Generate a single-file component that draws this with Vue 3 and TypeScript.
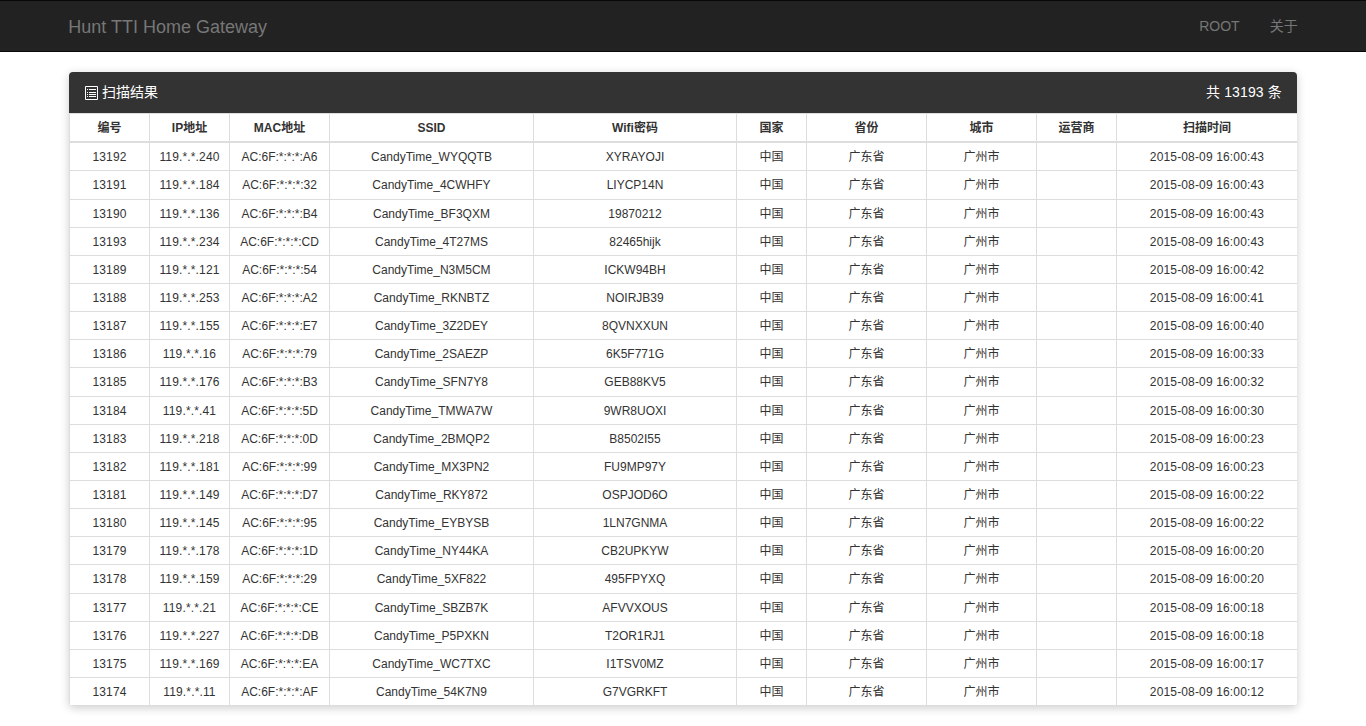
<script setup lang="ts">
interface Row { id: number; ip: string; mac: string; ssid: string; pwd: string; time: string }
const raw = `13192|240|A6|WYQQTB|XYRAYOJI|43
13191|184|32|4CWHFY|LIYCP14N|43
13190|136|B4|BF3QXM|19870212|43
13193|234|CD|4T27MS|82465hijk|43
13189|121|54|N3M5CM|ICKW94BH|42
13188|253|A2|RKNBTZ|NOIRJB39|41
13187|155|E7|3Z2DEY|8QVNXXUN|40
13186|16|79|2SAEZP|6K5F771G|33
13185|176|B3|SFN7Y8|GEB88KV5|32
13184|41|5D|TMWA7W|9WR8UOXI|30
13183|218|0D|2BMQP2|B8502I55|23
13182|181|99|MX3PN2|FU9MP97Y|23
13181|149|D7|RKY872|OSPJOD6O|22
13180|145|95|EYBYSB|1LN7GNMA|22
13179|178|1D|NY44KA|CB2UPKYW|20
13178|159|29|5XF822|495FPYXQ|20
13177|21|CE|SBZB7K|AFVVXOUS|18
13176|227|DB|P5PXKN|T2OR1RJ1|18
13175|169|EA|WC7TXC|I1TSV0MZ|17
13174|11|AF|54K7N9|G7VGRKFT|12`
const rows: Row[] = raw.split('\n').map((l) => {
  const [id, ip, mac, ssid, pwd, s] = l.split('|')
  return {
    id: Number(id),
    ip: `119.*.*.${ip}`,
    mac: `AC:6F:*:*:*:${mac}`,
    ssid: `CandyTime_${ssid}`,
    pwd,
    time: `2015-08-09 16:00:${s}`,
  }
})
const heads = ['编号', 'IP地址', 'MAC地址', 'SSID', 'Wifi密码', '国家', '省份', '城市', '运营商', '扫描时间']
const widths = [80, 80, 100, 204, 203, 70, 120, 110, 80, 181]
</script>

<template>
  <div class="page">
    <nav class="navbar">
      <div class="container bar">
        <a class="brand">Hunt TTI Home Gateway</a>
        <ul class="nav">
          <li>ROOT</li>
          <li>关于</li>
        </ul>
      </div>
    </nav>
    <div class="container">
      <section class="panel">
        <header class="heading">
          <span class="title">
            <svg class="icon" width="14" height="14" viewBox="0 0 14 14" aria-hidden="true">
              <path fill="none" stroke="currentColor" stroke-width="1" d="M.5 .5h12v13h-12z" />
              <path fill="none" stroke="currentColor" stroke-width="1" d="M2 3.5h1M4 3.5h7M2 6.5h1M4 6.5h7M2 8.5h1M4 8.5h7M2 10.5h1M4 10.5h7" />
            </svg>
            扫描结果
          </span>
          <span class="count">共 13193 条</span>
        </header>
        <table class="grid">
          <colgroup>
            <col v-for="(w, i) in widths" :key="i" :style="{ width: w + 'px' }" />
          </colgroup>
          <thead>
            <tr><th v-for="h in heads" :key="h">{{ h }}</th></tr>
          </thead>
          <tbody>
            <tr v-for="r in rows" :key="r.id">
              <td class="num">{{ r.id }}</td>
              <td class="num">{{ r.ip }}</td>
              <td>{{ r.mac }}</td>
              <td>{{ r.ssid }}</td>
              <td>{{ r.pwd }}</td>
              <td>中国</td>
              <td>广东省</td>
              <td>广州市</td>
              <td></td>
              <td class="num">{{ r.time }}</td>
            </tr>
          </tbody>
        </table>
      </section>
    </div>
  </div>
</template>

<style>
html, body { margin: 0; background: #fff; }
</style>

<style scoped>
.page {
  font-family: "Liberation Sans", "Noto Sans CJK SC", sans-serif;
  font-size: 14px;
  line-height: 1.42857143;
  color: #333;
}
.navbar {
  height: 50px;
  background: #222;
  border-top: 1px solid #080808;
  border-bottom: 1px solid #080808;
  margin-bottom: 20px;
}
.container {
  width: 90%;
  margin: 0 auto;
}
.bar {
  display: flex;
  justify-content: space-between;
  align-items: center;
  height: 100%;
}
.brand {
  font-size: 18px;
  line-height: 20px;
  padding-top: 2px;
  color: #777;
}
.nav {
  display: flex;
  gap: 30px;
  list-style: none;
  margin: 0;
  padding: 0;
  color: #777;
  line-height: 20px;
}
.panel {
  margin: 0 .7px 20px;
  border-radius: 4px;
  overflow: hidden;
  background: #fff;
  box-shadow: 0 2px 10px rgba(0, 0, 0, .2);
}
.heading {
  display: flex;
  justify-content: space-between;
  height: 21px;
  padding: 10px 15px;
  background: #333;
  color: #fff;
}
.title { display: flex; align-items: center; align-self: flex-start; gap: 3px; padding-top: 1px; margin-top: -1px; height: 20px; }
.icon { display: block; margin-top: 1px; margin-left: 1px; }
.count { letter-spacing: .15px; }
.grid {
  width: 100%;
  table-layout: fixed;
  border-collapse: collapse;
  font-size: 12px;
  text-align: center;
}
.grid th, .grid td {
  padding: 5px;
  border: 1px solid #ddd;
  font-weight: normal;
}
.grid td { padding: 6px 5px 4px; }
.grid th {
  padding: 6px 5px 4.2px;
  font-weight: bold;
  border-bottom-width: 2px;
}
.grid .num { letter-spacing: .15px; }
</style>
